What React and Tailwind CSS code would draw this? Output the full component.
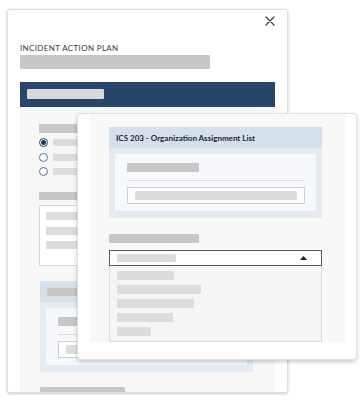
import React from 'react';

const Bar = ({ w, h = 'h-[9px]', tone = 'dark', className = '' }) => (
  <div className={`${w} ${h} shrink-0 rounded-[1px] ${tone === 'dark' ? 'bg-[#c7c7c7]' : 'bg-[#dcdcdc]'} ${className}`} />
);

const SectionBox = ({ title, className = '' }) => (
  <div className={`w-[213px] h-[91px] shrink-0 bg-[#e4ebf3] flex flex-col ${className}`}>
    <div className="h-[21px] shrink-0 bg-[#d6e0eb] flex items-center pl-[7px]">
      {title ? (
        <span className="text-[8px] font-bold text-[#1e2530] leading-none">{title}</span>
      ) : (
        <Bar w="w-[60px]" h="h-[8px]" />
      )}
    </div>
    <div className="mx-[6px] mt-[6px] h-[57px] shrink-0 bg-[#f6f8fb] pl-[12px] pr-[11px] pt-[9px]">
      <Bar w="w-[72px]" />
      <div className="mt-[8px] h-px bg-[#dcdcdc]" />
      <div className="mt-[6px] h-[17px] border border-[#cfcfcf] bg-white flex items-center px-[7px]">
        <Bar w="w-full" tone="light" />
      </div>
    </div>
  </div>
);

const Radio = ({ on }) => (
  <div className="flex items-center h-[9px] shrink-0">
    <div className={`w-[9px] h-[9px] shrink-0 rounded-full border ${on ? 'border-[#24446a]' : 'border-[#5d7189]'} flex items-center justify-center bg-white`}>
      {on && <div className="w-[5px] h-[5px] rounded-full bg-[#1f3a5e]" />}
    </div>
    <Bar w="w-[120px]" h="h-[7px]" tone="light" className="ml-[5px]" />
  </div>
);

export default function App() {
  return (
    <div className="relative w-[362px] h-[400px] bg-white overflow-hidden font-['Lato',sans-serif]">
      <div className="pl-[7px] pt-[9px]">
        {/* back modal */}
        <div className="w-[281px] h-[384px] bg-white border border-[#dedede] rounded-[3px] shadow-[0_1px_3px_rgba(0,0,0,0.22)] px-[12px] flex flex-col overflow-hidden">
          <div className="flex justify-end pt-[6px] shrink-0">
            <svg width="10" height="10" viewBox="0 0 10 10">
              <path d="M1 1L9 9M9 1L1 9" stroke="#444" strokeWidth="1.3" strokeLinecap="round" />
            </svg>
          </div>
          <div className="mt-[17px] h-[10px] shrink-0 text-[8px] leading-[10px] tracking-[0.35px] text-[#3a3a3a] uppercase">Incident Action Plan</div>
          <Bar w="w-[190px]" h="h-[14px]" className="mt-[1.5px]" />
          <div className="mt-[13px] h-[25px] shrink-0 bg-[#26466b] flex items-center pl-[7px]">
            <div className="w-[77px] h-[10px] bg-[#d9d9d9] rounded-[1px]" />
          </div>
          <div className="flex-1 shrink-0 bg-[#f7f7f7] pl-[19px] pt-[17px] flex flex-col">
            <Bar w="w-[90px]" />
            <div className="mt-[5.5px] flex flex-col gap-[5.5px] shrink-0">
              <Radio on />
              <Radio />
              <Radio />
            </div>
            <Bar w="w-[90px]" h="h-[8px]" className="mt-[16px]" />
            <div className="mt-[5px] w-[200px] h-[61px] shrink-0 border border-[#d8d8d8] bg-white pl-[6px] pt-[6px] flex flex-col gap-[6.5px]">
              <Bar w="w-[140px]" h="h-[8px]" tone="light" />
              <Bar w="w-[140px]" h="h-[8px]" tone="light" />
              <Bar w="w-[140px]" h="h-[8px]" tone="light" />
            </div>
            <SectionBox className="mt-[15px] ml-px" />
            <Bar w="w-[85px]" h="h-[9px]" className="mt-[15px] ml-px" />
          </div>
        </div>
      </div>

      {/* front modal, lying over the back one */}
      <div className="absolute left-[77px] top-[113px] w-[280px] h-[247px] bg-white border border-[#e0e0e0] rounded-[4px] shadow-[0_2px_4px_rgba(0,0,0,0.2)] px-[11px]">
        <div className="h-[228px] bg-[#f8f8f8] pl-[20px] pt-[13px]">
          <SectionBox title="ICS 203 - Organization Assignment List" />
          <Bar w="w-[90px]" className="mt-[16px]" />
          <div className="mt-[7px] w-[213px] h-[16px] border border-[#5a5a5a] bg-white flex items-center pl-[7px] pr-[14px]">
            <Bar w="w-[59px]" h="h-[8px]" tone="light" />
            <svg className="ml-auto" width="7" height="4" viewBox="0 0 7 4">
              <path d="M0 4L3.5 0L7 4Z" fill="#222" />
            </svg>
          </div>
          <div className="w-[213px] h-[76px] border-x border-b border-[#dcdcdc] bg-[#f5f5f5] pl-[7px] pt-[5px] flex flex-col gap-[5.5px]">
            <Bar w="w-[57px]" h="h-[8.5px]" tone="light" />
            <Bar w="w-[84px]" h="h-[8.5px]" tone="light" />
            <Bar w="w-[77px]" h="h-[8.5px]" tone="light" />
            <Bar w="w-[56px]" h="h-[8.5px]" tone="light" />
            <Bar w="w-[34px]" h="h-[8.5px]" tone="light" />
          </div>
        </div>
      </div>
    </div>
  );
}
